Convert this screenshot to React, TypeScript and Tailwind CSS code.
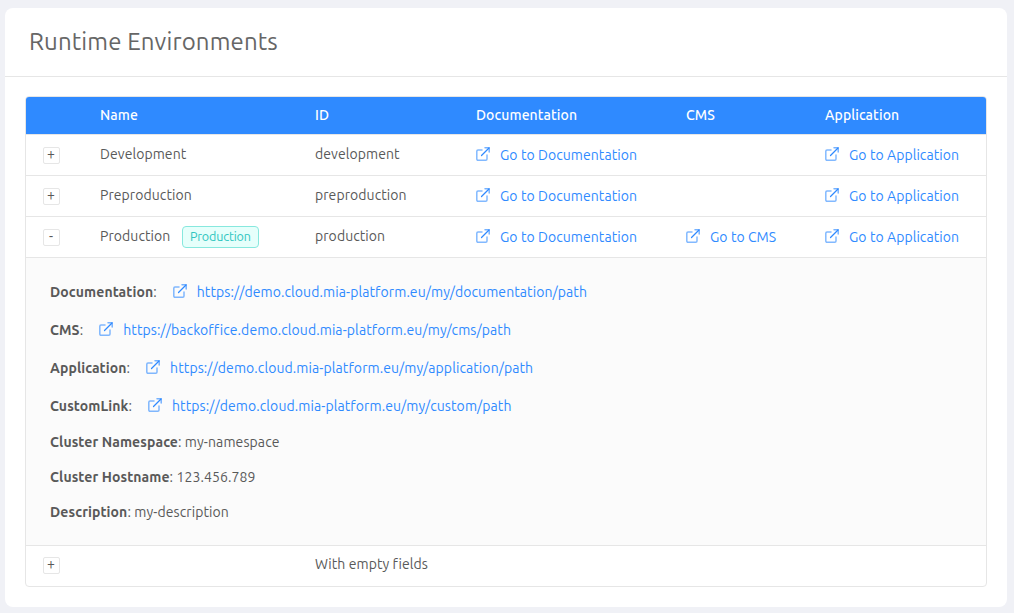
import type { ReactNode } from "react";

function LinkIcon() {
  return (
    <svg width="14" height="14" viewBox="0 0 14 14" fill="none" stroke="#2f8aff" strokeLinecap="round" strokeLinejoin="round" className="-mt-0.5 shrink-0">
      <path d="M6 3H2A1.200 1.200 0 0 0 .8 4.200V12A1.200 1.200 0 0 0 2 13.200H9.800A1.200 1.200 0 0 0 11 12V8" strokeWidth="1.5" strokeOpacity="0.6" />
      <path d="M9 .8H13.200V5" strokeWidth="1.500" strokeOpacity="0.65" />
      <path d="M5.500 8.500L13 1" strokeWidth="1.200" />
    </svg>
  );
}

function ExternalLink({ children }: { children: ReactNode }) {
  return (
    <a href="#" className="flex items-center gap-2.5 whitespace-nowrap text-[#2f8aff]">
      <LinkIcon />
      <span>{children}</span>
    </a>
  );
}

function ExpandButton({ open = false }: { open?: boolean }) {
  return (
    <button className="ml-[17px] flex h-[17px] w-[17px] items-center justify-center rounded-[2px] border border-[#e6e6e6] bg-white pr-px text-sm leading-none text-[#595959]">
      <span className="-mt-[3px]">{open ? "-" : "+"}</span>
    </button>
  );
}

type Environment = {
  name?: string;
  tag?: string;
  id: string;
  documentation?: boolean;
  cms?: boolean;
  application?: boolean;
  open?: boolean;
};

const columns = "grid grid-cols-[74px_215px_161px_210px_139px_1fr]";

const environments: Environment[] = [
  { name: "Development", id: "development", documentation: true, application: true },
  { name: "Preproduction", id: "preproduction", documentation: true, application: true },
  { name: "Production", tag: "Production", id: "production", documentation: true, cms: true, application: true, open: true },
  { id: "With empty fields" },
];

const links = [
  { label: "Documentation", url: "https://demo.cloud.mia-platform.eu/my/documentation/path" },
  { label: "CMS", url: "https://backoffice.demo.cloud.mia-platform.eu/my/cms/path" },
  { label: "Application", url: "https://demo.cloud.mia-platform.eu/my/application/path" },
  { label: "CustomLink", url: "https://demo.cloud.mia-platform.eu/my/custom/path" },
];

const fields = [
  { label: "Cluster Namespace", value: "my-namespace" },
  { label: "Cluster Hostname", value: "123.456.789" },
  { label: "Description", value: "my-description" },
];

function Details() {
  return (
    <div className="h-[288px] border-b border-[#e6e6e6] bg-[#fbfbfb] pl-6 pt-[22px] tracking-[0.095px]">
      {links.map((l) => (
        <div key={l.label} className="mb-3.5 flex h-6 items-center">
          <b>{l.label}</b>
          <span className="mr-4">:</span>
          <ExternalLink>{l.url}</ExternalLink>
        </div>
      ))}
      {fields.map((f) => (
        <p key={f.label} className="mb-3.5 h-[21px] leading-[21px]">
          <b>{f.label}</b>: {f.value}
        </p>
      ))}
    </div>
  );
}

export default function App() {
  return (
    <div className="h-[613px] overflow-hidden bg-[#f0f1f6] pl-[5px] pr-[7px] pt-2 font-['Ubuntu','Noto_Sans',sans-serif] text-sm tracking-[0.07px] text-[#595959]">
      <main className="h-[599px] rounded-lg bg-white">
        <h1 className="flex h-[69px] items-center border-b border-[#e6e6e6] pl-6 text-2xl tracking-[0.14px] text-[#666]">
          Runtime Environments
        </h1>
        <div className="mx-5 mt-[19px] overflow-hidden rounded-[4px] border border-[#e6e6e6]">
          <div className={`${columns} h-[38px] items-center border-b border-[#e6e6e6] bg-[#2f8aff] pb-px font-medium tracking-[0.1px] text-white`}>
            <span />
            <span>Name</span>
            <span>ID</span>
            <span>Documentation</span>
            <span>CMS</span>
            <span>Application</span>
          </div>
          {environments.map((env) => (
            <div key={env.id} className="group">
              <div className={`${columns} h-[41px] border-b border-[#e6e6e6] group-last:h-10 group-last:border-b-0`}>
                <div className="pt-3 group-last:pt-[11px]">
                  <ExpandButton open={env.open} />
                </div>
                <div className="flex h-[38px] items-center">
                  {env.name}
                  {env.tag && (
                    <span className="ml-[11.500px] mt-0.5 flex h-[22px] w-[77px] items-center justify-center rounded-[4px] border border-[#87e8de] bg-[#e6fffb] pb-px text-[12.5px] tracking-[-0.13px] text-[#2fc6c0]">
                      {env.tag}
                    </span>
                  )}
                </div>
                <div className="flex h-[38px] items-center group-last:h-9">{env.id}</div>
                <div className="flex h-10 items-center">{env.documentation && <ExternalLink>Go to Documentation</ExternalLink>}</div>
                <div className="flex h-10 items-center">{env.cms && <ExternalLink>Go to CMS</ExternalLink>}</div>
                <div className="flex h-10 items-center">{env.application && <ExternalLink>Go to Application</ExternalLink>}</div>
              </div>
              {env.open && <Details />}
            </div>
          ))}
        </div>
      </main>
    </div>
  );
}
